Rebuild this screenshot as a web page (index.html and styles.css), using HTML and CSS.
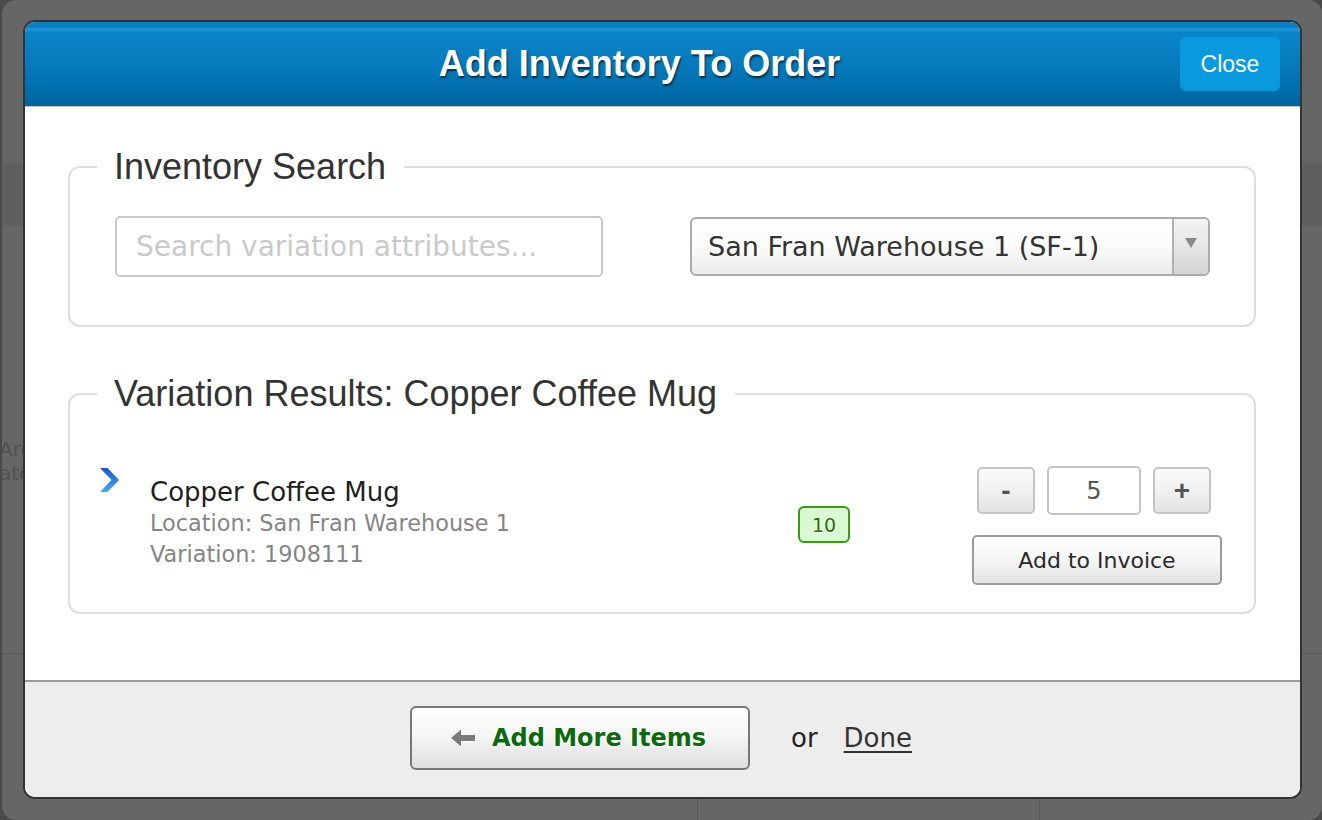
FILE: index.html
```html
<!DOCTYPE html>
<html lang="en">
<head>
<meta charset="utf-8">
<title>Add Inventory To Order</title>
<link rel="stylesheet" href="styles.css">
</head>
<body>
<div class="screen">
  <div class="under">
    <div class="under-band"></div>
    <div class="under-body">
      <div class="under-text">Arc<br>ate</div>
    </div>
    <div class="under-foot">
      <div class="under-cell cell-a"></div>
      <div class="under-cell cell-b"></div>
      <div class="under-cell cell-c"></div>
    </div>
  </div>

  <div class="modal">
    <header class="modal-head">
      <h1 class="modal-title">Add Inventory To Order</h1>
      <button class="btn-close" type="button">Close</button>
    </header>

    <main class="modal-body">
      <fieldset class="group group-search">
        <legend class="group-legend">Inventory Search</legend>
        <input class="search" type="text" placeholder="Search variation attributes...">
        <div class="select">
          <span class="select-label">San Fran Warehouse 1 (SF-1)</span>
          <span class="select-btn"><span class="select-caret"></span></span>
        </div>
      </fieldset>

      <fieldset class="group group-results">
        <legend class="group-legend">Variation Results: Copper Coffee Mug</legend>
        <div class="item">
          <svg class="chev" width="19" height="26" viewBox="0 0 19 26" aria-hidden="true">
            <defs>
              <linearGradient id="chevGrad" x1="0" y1="0" x2="0" y2="1">
                <stop offset="0" stop-color="#1559c4"/>
                <stop offset="1" stop-color="#45aaf4"/>
              </linearGradient>
            </defs>
            <polygon points="0,1 7.5,1 19,13 7.5,25 0,25 11.5,13" fill="url(#chevGrad)"/>
          </svg>
          <div class="item-info">
            <div class="item-name">Copper Coffee Mug</div>
            <div class="item-meta">Location: San Fran Warehouse 1</div>
            <div class="item-meta">Variation: 1908111</div>
          </div>
          <span class="badge">10</span>
          <div class="controls">
            <div class="stepper">
              <button class="step-btn" type="button">-</button>
              <input class="qty" type="text" value="5">
              <button class="step-btn" type="button">+</button>
            </div>
            <button class="btn-invoice" type="button">Add to Invoice</button>
          </div>
        </div>
      </fieldset>
    </main>

    <footer class="modal-foot">
      <button class="btn-more" type="button">
        <svg class="back-arrow" width="24" height="18" viewBox="0 0 24 18" aria-hidden="true">
          <polygon points="0,9 10,0.5 10,6 24,6 24,12 10,12 10,17.5" fill="#7a7a7a"/>
        </svg>
        <span class="btn-more-label">Add More Items</span>
      </button>
      <span class="or">or</span>
      <a class="done" href="#">Done</a>
    </footer>
  </div>
</div>
</body>
</html>
```

FILE: styles.css
```css
* { box-sizing: border-box; }

body {
  margin: 0;
  background: #4a4a4a;
}

.screen {
  position: relative;
  margin-left: 2px;
  height: 820px;
  background: #666;
  border-radius: 14px;
  overflow: hidden;
  font-family: "DejaVu Sans", sans-serif;
}

/* faint page beneath the overlay */
.under-band {
  margin-top: 163px;
  height: 63px;
  background: #5f5f5f;
}
.under-body {
  height: 428px;
  padding-top: 211px;
  border-bottom: 1px solid #5a5a5a;
}
.under-text {
  margin-left: -3px;
  font-size: 20px;
  line-height: 24px;
  color: #505050;
}
.under-foot {
  display: flex;
  height: 166px;
}
.under-cell { height: 100%; }
.cell-a { width: 696px; border-right: 1px solid #585858; }
.cell-b { width: 342px; border-right: 1px solid #585858; }
.cell-c { flex: 1; }

/* modal */
.modal {
  position: absolute;
  left: 21px;
  top: 20px;
  width: 1279px;
  height: 779px;
  border: 2px solid #333;
  border-radius: 12px;
  overflow: hidden;
  background: #fff;
  display: flex;
  flex-direction: column;
}

.modal-head {
  height: 85px;
  flex: none;
  display: grid;
  grid-template-columns: 1fr auto 1fr;
  align-items: center;
  border-bottom: 1px solid #c6c6c6;
  background: linear-gradient(to bottom,
    #0a7cc0 0px, #0a7dc1 5px, #2095d5 7px, #0a85c9 10px,
    #0679bb 45px, #006aa6 75px, #00639b 84px);
}

.modal-title {
  grid-column: 2;
  margin: 0 46px 0 0;
  font-family: "Liberation Sans", Arial, sans-serif;
  font-weight: bold;
  font-size: 36px;
  line-height: 40px;
  color: #fff;
  text-shadow: 1px 2px 2px rgba(0, 0, 0, 0.6);
}

.btn-close {
  grid-column: 3;
  justify-self: end;
  margin-right: 20px;
  width: 100px;
  height: 54px;
  border: none;
  border-radius: 6px;
  background: #0999de;
  color: #fff;
  font-family: "Liberation Sans", Arial, sans-serif;
  font-size: 23px;
  padding: 0;
}

.modal-body {
  flex: 1;
  padding: 40px 44px 0 43px;
}

.group {
  margin: 0;
  border: 2px solid #dedede;
  border-radius: 12px;
  min-width: 0;
}

.group-legend {
  padding: 0 18px 0 17px;
  font-family: "Liberation Sans", Arial, sans-serif;
  font-size: 36px;
  line-height: 40px;
  color: #333;
}

.group-search {
  display: flex;
  align-items: center;
  justify-content: space-between;
  padding: 29px 44px 48px 45px;
}
.group-search .group-legend { margin-left: -18px; }

.search {
  width: 488px;
  height: 61px;
  border: 2px solid #c8c8c8;
  border-radius: 5px;
  padding: 0 0 0 19px;
  font-family: "DejaVu Sans", sans-serif;
  font-size: 28px;
  color: #333;
  outline: none;
}
.search::placeholder { color: #c9c9c9; }

.select {
  width: 520px;
  height: 59px;
  display: flex;
  border: 2px solid #ababab;
  border-radius: 6px;
  overflow: hidden;
  background: linear-gradient(to bottom, #ffffff 0%, #fbfbfb 50%, #ebebeb 100%);
}
.select-label {
  flex: 1;
  display: flex;
  align-items: center;
  padding-left: 16px;
  font-size: 27px;
  color: #333;
}
.select-btn {
  width: 36px;
  display: flex;
  justify-content: center;
  padding-top: 19px;
  border-left: 2px solid #b0b0b0;
  background: linear-gradient(to bottom, #f3f3f3 0%, #e6e6e6 50%, #d4d4d4 100%);
}
.select-caret {
  width: 0;
  height: 0;
  border-left: 6px solid transparent;
  border-right: 6px solid transparent;
  border-top: 10px solid #8a8a8a;
}

.group-results {
  margin-top: 47px;
  padding: 52px 32px 27px 30px;
}
.group-results .group-legend { margin-left: -3px; }

.item {
  display: flex;
  align-items: center;
}

.chev {
  align-self: flex-start;
  flex: none;
  margin-top: 1px;
  margin-right: 31px;
}

.item-info {
  flex: 1;
  align-self: flex-start;
  margin-top: 11px;
}
.item-name {
  font-size: 26px;
  line-height: 31px;
  color: #1e1e1e;
}
.item-meta {
  font-size: 22.4px;
  line-height: 31px;
  color: #858585;
}

.badge {
  width: 52px;
  height: 37px;
  margin-right: 122px;
  margin-top: -2px;
  display: flex;
  align-items: center;
  justify-content: center;
  border: 2px solid #3a9a12;
  border-radius: 6px;
  background: #dbf8d4;
  color: #2c6b06;
  font-size: 19px;
  text-shadow: 0 1px 0 #fff;
}

.controls {
  width: 250px;
  display: flex;
  flex-direction: column;
  align-items: center;
  gap: 20px;
}

.stepper {
  display: flex;
  align-items: center;
  gap: 12px;
  margin-left: -6px;
}

.step-btn {
  width: 58px;
  height: 47px;
  padding: 0;
  border: 2px solid #c4c4c4;
  border-radius: 5px;
  background: linear-gradient(to bottom, #fbfbfb 0%, #f1f1f1 50%, #e2e2e2 100%);
  font-family: "Liberation Sans", Arial, sans-serif;
  font-weight: bold;
  font-size: 28px;
  color: #555;
}

.qty {
  width: 94px;
  height: 49px;
  border: 2px solid #c4c4c4;
  border-radius: 5px;
  text-align: center;
  font-family: "DejaVu Sans", sans-serif;
  font-size: 24px;
  color: #555;
  outline: none;
}

.btn-invoice {
  width: 250px;
  height: 50px;
  padding: 0;
  border: 2px solid #9c9c9c;
  border-radius: 5px;
  background: linear-gradient(to bottom, #ffffff 0%, #f5f5f5 50%, #e4e4e4 100%);
  font-family: "DejaVu Sans", sans-serif;
  font-size: 22px;
  color: #2a2a2a;
}

.modal-foot {
  height: 117px;
  flex: none;
  display: flex;
  align-items: center;
  justify-content: center;
  border-top: 2px solid #9a9a9a;
  background: #ededed;
  padding: 0 3px 3px 0;
}

.btn-more {
  width: 340px;
  height: 64px;
  display: flex;
  align-items: center;
  justify-content: center;
  gap: 17px;
  padding: 0 3px 0 0;
  border: 2px solid #777;
  border-radius: 6px;
  background: linear-gradient(to bottom, #ffffff 0%, #f4f4f4 50%, #dedede 100%);
}
.back-arrow {
  flex: none;
  filter: drop-shadow(0 1px 0 #fff);
}
.btn-more-label {
  font-family: "DejaVu Sans", sans-serif;
  font-weight: bold;
  font-size: 24px;
  color: #0d690d;
  text-shadow: 0 0 3px #fff, 0 1px 1px #fff;
}

.or {
  margin-left: 41px;
  font-size: 26px;
  color: #222;
}
.done {
  margin-left: 26px;
  font-size: 26px;
  color: #333;
  text-decoration: underline;
  text-underline-offset: 4px;
}
```
